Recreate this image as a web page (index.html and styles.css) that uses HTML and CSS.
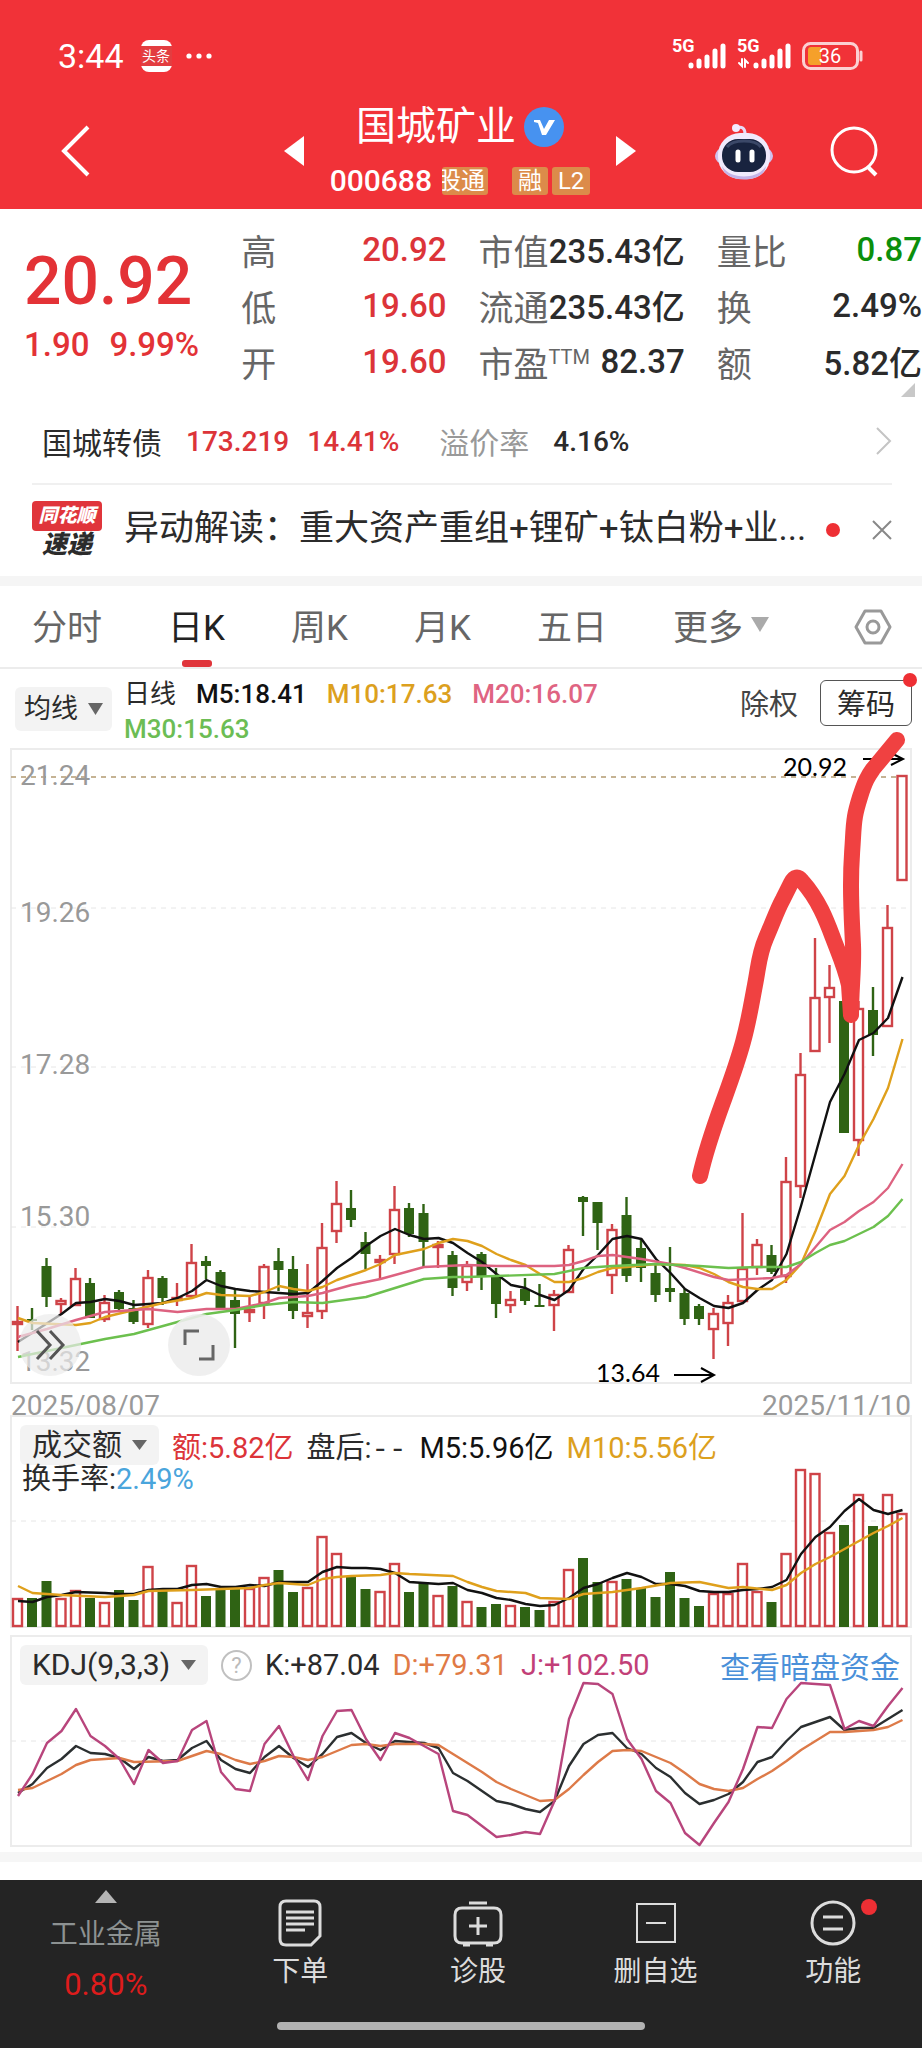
FILE: index.html
```
<!DOCTYPE html>
<html lang="zh">
<head>
    <meta charset="UTF-8">
    <meta name="viewport" content="width=device-width, initial-scale=1.0">
    <title>国城矿业 000688</title>
    <link rel="stylesheet" href="styles.css">
</head>
<body>
    <header class="header">
        <div class="status-bar">
            <span class="status-time">3:44</span>
            <span class="status-app"><span>头条</span></span>
            <svg class="status-dots" width="28" height="8" viewBox="0 0 28 8" fill="#fff"><circle cx="4" cy="4" r="2.6"/><circle cx="14" cy="4" r="2.6"/><circle cx="24" cy="4" r="2.6"/></svg>
            <div class="status-right">
                <div class="signal">
                    <span>5G</span>
                    <svg width="38" height="26" viewBox="0 0 38 26" stroke="#fff" stroke-width="5" stroke-linecap="round"><path d="M3 23v-1M11 23v-5M19 23v-9M27 23V8M35 23V3"/></svg>
                </div>
                <div class="signal">
                    <span>5G</span>
                    <svg width="54" height="26" viewBox="-16 0 54 26" fill="none" stroke="#fff" stroke-width="5" stroke-linecap="round"><path d="M3 23v-1M11 23v-5M19 23v-9M27 23V8M35 23V3"/><path stroke-width="2" d="M-14 20l3 3v-7M-8 24v-7l3 3"/></svg>
                </div>
                <svg class="battery" width="62" height="28" viewBox="0 0 62 28"><rect x="1.500" y="1.500" width="54" height="25" rx="7" fill="none" stroke="#fbd0d2" stroke-width="3"/><path d="M9 5h10v18H9a3 3 0 0 1-3-3V8a3 3 0 0 1 3-3z" fill="#f5a02a"/><path d="M59 10v8" stroke="#fbd0d2" stroke-width="3" stroke-linecap="round"/><text x="28" y="21" text-anchor="middle" class="battery-text">36</text></svg>
            </div>
        </div>
        <div class="title-bar">
            <button class="icon-button" aria-label="返回"><svg width="32" height="54" viewBox="0 0 32 54" fill="none" stroke="#fff" stroke-width="4"><path d="M28 3L4 27l24 24"/></svg></button>
            <div class="stock-nav">
                <button class="icon-button" aria-label="上一只"><svg width="20" height="30" viewBox="0 0 20 30" fill="#fff"><path d="M20 0v30L0 15z"/></svg></button>
                <div class="stock-info">
                    <h1>国城矿业 <svg width="40" height="40" viewBox="0 0 40 40"><circle cx="20" cy="20" r="20" fill="#4792f0"/><path d="M10 13h6l4 9 5-9h6L22 28h-4l-4-12-4-1z" fill="#fff"/></svg></h1>
                    <div class="stock-code">
                        <span>000688</span>
                        <span class="tag tag-cut"><span>股通</span></span>
                        <span class="tag tag-rong">融</span>
                        <span class="tag">L2</span>
                    </div>
                </div>
                <button class="icon-button" aria-label="下一只"><svg width="20" height="30" viewBox="0 0 20 30" fill="#fff"><path d="M0 0v30l20-15z"/></svg></button>
            </div>
            <div class="title-actions">
                <button class="icon-button" aria-label="智能助手">
                    <svg width="60" height="58" viewBox="0 0 60 58">
                        <path d="M22 6c6-2 9 0 9 6" fill="none" stroke="#e6dcf8" stroke-width="3"/>
                        <circle cx="22" cy="6" r="4" fill="#f3ebff"/>
                        <ellipse cx="30" cy="34" rx="29" ry="14" fill="#cfc2ee"/>
                        <rect x="4" y="11" width="52" height="46" rx="22" fill="#f0eafc"/>
                        <path d="M8 44c8 14 36 14 44 0-2 18-42 18-44 0z" fill="#c3b3e8"/>
                        <rect x="8" y="17" width="44" height="33" rx="16" fill="#18233f"/>
                        <path d="M13 25c6-8 28-8 34 0" fill="none" stroke="#3b4868" stroke-width="3"/>
                        <path d="M24 30v8M38 30v8" stroke="#fff" stroke-width="5" stroke-linecap="round"/>
                    </svg>
                </button>
                <button class="icon-button" aria-label="搜索"><svg width="52" height="52" viewBox="0 0 52 52" fill="none" stroke="#fff" stroke-width="3"><circle cx="26" cy="25" r="22"/><path d="M40 42l8 8" stroke-width="4"/></svg></button>
            </div>
        </div>
    </header>

    <section class="quote">
        <div class="quote-price">
            <strong>20.92</strong>
            <p><span>1.90</span><span>9.99%</span></p>
        </div>
        <dl>
            <div><dt>高</dt><dd class="up">20.92</dd></div>
            <div><dt>低</dt><dd class="up">19.60</dd></div>
            <div><dt>开</dt><dd class="up">19.60</dd></div>
        </dl>
        <dl>
            <div><dt>市值</dt><dd>235.43亿</dd></div>
            <div><dt>流通</dt><dd>235.43亿</dd></div>
            <div><dt>市盈<sup>TTM</sup></dt><dd>82.37</dd></div>
        </dl>
        <dl>
            <div><dt>量比</dt><dd class="down">0.87</dd></div>
            <div><dt>换</dt><dd>2.49%</dd></div>
            <div><dt>额</dt><dd>5.82亿</dd></div>
        </dl>
        <svg class="quote-corner" width="14" height="14" viewBox="0 0 14 14"><path d="M14 0v14H0z" fill="#c8c8c8"/></svg>
    </section>

    <a class="bond" href="#">
        <span class="bond-name">国城转债</span>
        <span class="up">173.219</span>
        <span class="up">14.41%</span>
        <span class="bond-label">溢价率</span>
        <span>4.16%</span>
        <svg width="16" height="28" viewBox="0 0 16 28" fill="none" stroke="#c4c4c4" stroke-width="2"><path d="M1 1l13 13L1 27"/></svg>
    </a>

    <div class="news">
        <div class="news-logo"><span>同花顺</span><b>速递</b></div>
        <a class="news-text" href="#">异动解读：重大资产重组+锂矿+钛白粉+业...</a>
        <i class="dot"></i>
        <button class="icon-button" aria-label="关闭"><svg width="20" height="20" viewBox="0 0 20 20" stroke="#888" stroke-width="2"><path d="M1 1l18 18M19 1L1 19"/></svg></button>
    </div>

    <nav class="tabs">
        <button>分时</button>
        <button class="active">日K</button>
        <button>周K</button>
        <button>月K</button>
        <button>五日</button>
        <button class="more">更多<svg width="18" height="15" viewBox="0 0 18 15" fill="#aaa"><path d="M0 0h18L9 15z"/></svg></button>
        <button class="settings" aria-label="设置"><svg width="38" height="38" viewBox="0 0 38 38" fill="none" stroke="#999" stroke-width="3" stroke-linejoin="round"><path d="M11 3h16l9 16-9 16H11L2 19z"/><circle cx="19" cy="19" r="6"/></svg></button>
    </nav>

    <div class="ma-bar">
        <label class="picker picker-small"><select aria-label="主图指标"><option>均线</option></select><svg width="15" height="12" viewBox="0 0 15 12" fill="#666"><path d="M0 0h15L7.500 12z"/></svg></label>
        <div class="ma-legend">
            <span>日线</span>
            <span class="m5">M5:18.41</span>
            <span class="m10">M10:17.63</span>
            <span class="m20">M20:16.07</span>
            <span class="m30">M30:15.63</span>
        </div>
        <button class="plain-button">除权</button>
        <button class="box-button">筹码<i class="dot"></i></button>
    </div>

    <div class="chart">
        <svg id="kline" viewBox="0 0 900 634"></svg>
        <button class="round-button" aria-label="快进"><svg width="32" height="32" viewBox="0 0 32 32" fill="none" stroke="#555" stroke-width="3"><path d="M3 2l13 14L3 30M16 2l13 14-13 14"/></svg></button>
        <button class="round-button full-button" aria-label="全屏"><svg width="32" height="32" viewBox="0 0 32 32" fill="none" stroke="#666" stroke-width="3"><path d="M2 16V2h14M30 16v14H16"/></svg></button>
    </div>

    <div class="dates"><span>2025/08/07</span><span>2025/11/10</span></div>

    <div class="chart chart-stack">
        <svg id="volume" viewBox="0 0 900 212"></svg>
        <div class="chart-head">
            <div class="chart-row">
                <label class="picker"><select aria-label="副图指标"><option>成交额</option></select><svg width="15" height="10" viewBox="0 0 15 10" fill="#666"><path d="M0 0h15L7.500 10z"/></svg></label>
                <span class="up">额:5.82亿</span>
                <span>盘后:<span class="mono">--</span></span>
                <span class="m5">M5:5.96亿</span>
                <span class="m10">M10:5.56亿</span>
            </div>
            <div class="turnover">换手率:<span>2.49%</span></div>
        </div>
    </div>

    <div class="chart chart-stack chart-kdj">
        <svg id="kdj" viewBox="0 0 900 210"></svg>
        <div class="chart-head">
            <div class="chart-row">
                <label class="picker"><select aria-label="副图指标"><option>KDJ(9,3,3)</option></select><svg width="15" height="10" viewBox="0 0 15 10" fill="#666"><path d="M0 0h15L7.500 10z"/></svg></label>
                <button class="help" aria-label="说明">?</button>
                <span>K:+87.04</span>
                <span class="d">D:+79.31</span>
                <span class="j">J:+102.50</span>
                <a class="fund-link" href="#">查看暗盘资金</a>
            </div>
        </div>
    </div>

    <div class="divider"></div>

    <nav class="bottom-nav">
        <a class="sector" href="#">
            <svg width="22" height="13" viewBox="0 0 22 13" fill="#b4b4b4"><path d="M11 0l11 13H0z"/></svg>
            <span>工业金属</span>
            <b>0.80%</b>
        </a>
        <a href="#">
            <svg width="44" height="48" viewBox="0 0 44 48" fill="none" stroke="#dcdcdc" stroke-width="3"><path d="M8 2h28q6 0 6 6v29l-9 9H8q-6 0-6-6V8q0-6 6-6z"/><path d="M8 13h28M8 19h28M8 25h28M8 31h19"/></svg>
            <span>下单</span>
        </a>
        <a href="#">
            <svg width="50" height="48" viewBox="0 0 50 48" fill="none" stroke="#dcdcdc" stroke-width="3"><path d="M16 4h18M9 9h32q7 0 7 7v21q0 7-7 7H9q-7 0-7-7V16q0-7 7-7zM25 18v18M16 27h18M10 46h7M33 46h7"/></svg>
            <span>诊股</span>
        </a>
        <a href="#">
            <svg width="42" height="48" viewBox="0 0 42 48" fill="none" stroke="#dcdcdc" stroke-width="2"><path d="M2 5h38v38H2zM11 24h20"/></svg>
            <span>删自选</span>
        </a>
        <a href="#">
            <span class="nav-icon"><svg width="46" height="48" viewBox="0 0 46 48" fill="none" stroke="#dcdcdc" stroke-width="3"><circle cx="23" cy="24" r="21"/><path d="M13 18h20M13 30h20"/></svg><i class="dot"></i></span>
            <span>功能</span>
        </a>
    </nav>
    <footer class="home"><i></i></footer>

    <script src="chart.js"></script>
</body>
</html>
```

FILE: styles.css
```
* {
    box-sizing: border-box;
}

body {
    margin: 0;
    font-family: Roboto, "Noto Sans CJK SC", sans-serif;
    color: #2b2b2b;
    background: #fff;
    overflow-x: hidden;
}

h1, dl, dd, p {
    margin: 0;
    font-weight: normal;
}

a {
    color: inherit;
    text-decoration: none;
}

button, select {
    font: inherit;
    color: inherit;
    background: none;
    border: none;
    padding: 0;
    cursor: pointer;
}

svg {
    display: block;
    flex: none;
}

.icon-button {
    flex: none;
}

.up {
    color: #dc3439;
}

.down {
    color: #0b8f0b;
}

.dot {
    flex: none;
    width: 14px;
    height: 14px;
    border-radius: 50%;
    background: #ee2f34;
}

/* 顶部 */
.header {
    background: #f13238;
    color: #fff;
}

.status-bar {
    display: flex;
    align-items: center;
    height: 96px;
    padding: 16px 58px 0;
}

.status-time {
    font-size: 34px;
}

.status-app {
    display: flex;
    align-items: center;
    width: 31px;
    height: 32px;
    margin: 0 13px 0 17px;
    border-radius: 8px;
    background: #fff;
}

.status-app span {
    width: 100%;
    font-size: 14px;
    line-height: 20px;
    text-align: center;
    background: #e33d40;
}

.status-right {
    display: flex;
    align-items: center;
    gap: 11px;
    margin-left: auto;
}

.signal {
    position: relative;
    padding-left: 16px;
}

.signal:nth-child(2) {
    padding-left: 0;
}

.signal span {
    position: absolute;
    top: -6px;
    left: 0;
    font-size: 18px;
    font-weight: 700;
    line-height: 18px;
}

.battery-text {
    fill: #fff;
    font-size: 20px;
}

.title-bar {
    display: grid;
    grid-template-columns: 1fr auto 1fr;
    align-items: center;
    height: 113px;
    padding: 0 42px 4px 60px;
}

.stock-nav {
    display: flex;
    align-items: center;
    gap: 26px;
    margin-left: -20px;
}

.stock-info {
    display: flex;
    flex-direction: column;
    align-items: center;
    gap: 11px;
}

.stock-info h1 {
    display: flex;
    align-items: center;
    gap: 8px;
    font-size: 40px;
    line-height: 50px;
}

.stock-code {
    display: flex;
    align-items: center;
    gap: 4px;
    font-size: 30px;
    font-weight: 500;
    line-height: 36px;
}

.tag {
    padding: 0 6px;
    border-radius: 3px;
    font-size: 24px;
    font-weight: 400;
    line-height: 28px;
    white-space: nowrap;
    background: #dc8b4a;
}

.tag-cut {
    display: flex;
    justify-content: flex-end;
    width: 46px;
    padding: 0 3px 0 0;
    margin-left: 6px;
    overflow: hidden;
}

.tag-rong {
    margin-left: 20px;
}

.title-actions {
    display: flex;
    justify-content: flex-end;
    align-items: center;
    gap: 54px;
}

/* 行情 */
.quote {
    position: relative;
    display: grid;
    grid-template-columns: 185fr 205fr 206fr 205fr;
    column-gap: 32px;
    padding: 12px 0 6px 24px;
}

.quote-price {
    padding-top: 28px;
    color: #e33236;
    white-space: nowrap;
}

.quote-price strong {
    display: block;
    font-size: 66px;
    font-weight: 500;
    line-height: 66px;
}

.quote-price p {
    display: flex;
    gap: 20px;
    margin-top: 8px;
    font-size: 33px;
    font-weight: 500;
    line-height: 44px;
}

.quote dl div {
    display: flex;
    justify-content: space-between;
    align-items: center;
    height: 56px;
    white-space: nowrap;
}

.quote dt {
    font-size: 35px;
    color: #666;
}

.quote sup {
    font-size: 20px;
}

.quote dd {
    font-size: 33px;
    font-weight: 500;
}

.quote-corner {
    position: absolute;
    right: 7px;
    bottom: -2px;
}

.bond {
    display: flex;
    align-items: center;
    height: 90px;
    margin: 0 30px 0 32px;
    padding: 4px 0 0 10px;
    font-size: 28px;
    font-weight: 500;
    border-bottom: 2px solid #f0f0f0;
}

.bond span {
    margin-right: 18px;
}

.bond .bond-name, .bond .bond-label {
    margin-right: 24px;
    font-size: 30px;
    font-weight: 400;
}

.bond .bond-label {
    margin-left: 22px;
    color: #999;
}

.bond svg {
    margin-left: auto;
}

.news {
    display: flex;
    align-items: center;
    height: 91px;
    padding: 0 30px 2px 32px;
}

.news-logo {
    width: 70px;
    margin-right: 22px;
    font-style: italic;
    font-weight: 900;
    text-align: center;
}

.news-logo span {
    display: block;
    border-radius: 4px;
    font-size: 19px;
    line-height: 30px;
    color: #fff;
    background: #e0353b;
}

.news-logo b {
    display: block;
    font-size: 25px;
    line-height: 28px;
}

.news-text {
    flex: 1;
    font-size: 35px;
    line-height: 50px;
    padding-bottom: 2px;
    white-space: nowrap;
}

.news .icon-button {
    margin-left: 32px;
}

/* 周期 */
.tabs {
    display: flex;
    gap: 66px;
    height: 93px;
    padding: 0 30px 0 32px;
    font-size: 35px;
    color: #666;
    border-top: 10px solid #f5f5f5;
    border-bottom: 2px solid #ececec;
}

.tabs button {
    position: relative;
    padding-bottom: 4px;
    white-space: nowrap;
}

.tabs .active {
    color: #222;
}

.tabs .active::after {
    content: "";
    position: absolute;
    bottom: 0;
    left: 50%;
    width: 30px;
    height: 7px;
    margin-left: -15px;
    border-radius: 3px;
    background: #e0353b;
}

.tabs .more {
    display: flex;
    align-items: center;
    gap: 8px;
}

.tabs .settings {
    padding-bottom: 0;
    margin-left: auto;
}

.ma-bar {
    display: flex;
    align-items: center;
    height: 80px;
    padding: 0 10px 0 15px;
}

.picker {
    display: flex;
    align-items: center;
    gap: 10px;
    height: 40px;
    padding: 0 12px;
    border-radius: 6px;
    font-size: 30px;
    background: #f3f3f3;
}

.picker select {
    appearance: none;
    line-height: 40px;
}

.picker-small {
    height: 44px;
    padding: 0 9px;
    font-size: 27px;
}

.ma-legend {
    display: flex;
    flex: 1;
    flex-wrap: wrap;
    column-gap: 20px;
    padding: 6px 0 0 12px;
    font-size: 26px;
    line-height: 35px;
}

.ma-legend span {
    font-weight: 500;
}

.ma-legend span:first-child {
    font-weight: 400;
}

.m5 {
    color: #111;
}

.m10 {
    color: #dca01e;
}

.m20 {
    color: #df6482;
}

.m30 {
    color: #6cbd54;
}

.plain-button {
    margin: 0 22px 14px;
    font-size: 29px;
    color: #444;
}

.box-button {
    position: relative;
    height: 46px;
    padding: 0 16px 4px;
    margin-bottom: 12px;
    border: 1px solid #555;
    border-radius: 6px;
    font-size: 29px;
}

.box-button .dot {
    position: absolute;
    top: -8px;
    right: -6px;
}

/* 图表 */
.chart {
    position: relative;
    margin: 0 11px;
}

.chart > svg {
    width: 100%;
    height: auto;
    overflow: visible;
}

.chart-stack {
    display: grid;
}

.chart-stack > * {
    grid-area: 1 / 1;
}

.chart-kdj {
    margin-top: 8px;
}

.chart-head {
    position: relative;
    padding: 9px 11px 0 9px;
    font-size: 29px;
}

.chart-row {
    display: flex;
    align-items: center;
    gap: 13px;
    height: 40px;
    white-space: nowrap;
}

.turnover {
    padding-left: 2px;
    line-height: 28px;
}

.turnover span {
    color: #4aa5dc;
}

.mono {
    font-family: "Liberation Mono", monospace;
}

.d {
    color: #e07a45;
}

.j {
    color: #c23f78;
}

.help {
    width: 31px;
    height: 31px;
    border: 2px solid #c0c0c0;
    border-radius: 50%;
    font-size: 22px;
    line-height: 27px;
    color: #bbb;
}

.fund-link {
    margin-left: auto;
    font-size: 30px;
    color: #4a90d9;
}

.round-button {
    position: absolute;
    left: 8px;
    bottom: 7px;
    display: flex;
    align-items: center;
    justify-content: center;
    width: 62px;
    height: 62px;
    border-radius: 50%;
    background: rgba(235, 235, 235, 0.7);
}

.full-button {
    left: 157px;
    background: rgba(237, 237, 237, 0.9);
}

.axis-text {
    font-size: 28px;
    fill: #999;
}

.mark-text {
    font-family: Lato, sans-serif;
    font-size: 25px;
}

.dates {
    display: flex;
    justify-content: space-between;
    margin: 0 11px;
    height: 33px;
    font-size: 28px;
    line-height: 46px;
    color: #999;
}

/* 底部 */
.divider {
    height: 28px;
    margin-top: 6px;
    border-top: 10px solid #f6f6f6;
}

.bottom-nav {
    display: grid;
    grid-template-columns: 212fr 178fr 178fr 178fr 178fr;
    height: 132px;
    font-size: 28px;
    color: #dcdcdc;
    background: #242424;
}

.bottom-nav a {
    display: flex;
    flex-direction: column;
    align-items: center;
    gap: 7px;
    padding-top: 19px;
    line-height: 36px;
}

.bottom-nav .sector {
    gap: 14px;
    padding-top: 10px;
    color: #8d9292;
}

.sector b {
    font-size: 31px;
    font-weight: 400;
    color: #dd1c1c;
}

.nav-icon {
    position: relative;
}

.nav-icon .dot {
    position: absolute;
    top: 0;
    right: -21px;
    width: 16px;
    height: 16px;
}

.home {
    display: flex;
    justify-content: center;
    height: 36px;
    padding-top: 10px;
    background: #242424;
}

.home i {
    width: 40%;
    height: 8px;
    border-radius: 4px;
    background: #b2b2b2;
}
```

FILE: chart.js
```
const RED = '#cf4348';
const GREEN = '#2f6314';
const STEP = 14.5;

// 涨跌, 最高, 实体上沿, 实体下沿, 最低
const candles = [
    ['r', 557, 572, 576, 602], ['g', 559, 570, 571, 581], ['g', 509, 517, 548, 558], ['r', 549, 551, 556, 566],
    ['r', 519, 529, 557, 557], ['g', 529, 534, 569, 569], ['r', 546, 553, 571, 573], ['g', 541, 543, 560, 562],
    ['g', 551, 559, 573, 575], ['r', 521, 528, 576, 579], ['g', 527, 529, 549, 556], ['r', 534, 548, 552, 557],
    ['r', 495, 513, 548, 548], ['g', 507, 512, 517, 530], ['g', 521, 523, 559, 559], ['g', 540, 551, 565, 599],
    ['r', 548, 560, 564, 573], ['r', 515, 517, 555, 570], ['g', 499, 512, 521, 542], ['g', 507, 520, 562, 570],
    ['r', 515, 563, 568, 579], ['r', 474, 498, 563, 570], ['r', 432, 454, 483, 494], ['g', 441, 459, 471, 478],
    ['g', 483, 493, 505, 520], ['r', 506, 510, 514, 531], ['r', 437, 460, 506, 515], ['g', 454, 459, 485, 488],
    ['g', 455, 464, 493, 518], ['r', 492, 495, 499, 519], ['g', 502, 506, 539, 547], ['r', 512, 516, 534, 542],
    ['g', 503, 505, 528, 541], ['g', 519, 527, 555, 569], ['r', 542, 550, 557, 564], ['g', 529, 540, 552, 556],
    ['g', 535, 556, 558, 558], ['r', 541, 545, 557, 582], ['r', 496, 500, 544, 544], ['g', 447, 448, 453, 487],
    ['g', 453, 453, 474, 501], ['r', 475, 480, 527, 545], ['g', 448, 466, 527, 533], ['g', 490, 499, 519, 533],
    ['g', 515, 524, 546, 553], ['g', 498, 539, 543, 553], ['g', 540, 544, 570, 576], ['g', 555, 557, 570, 576],
    ['r', 559, 564, 581, 610], ['r', 546, 553, 575, 597], ['r', 464, 519, 553, 553], ['r', 490, 495, 519, 526],
    ['g', 496, 506, 523, 525], ['r', 408, 432, 528, 534], ['r', 304, 325, 438, 449], ['r', 189, 248, 303, 303],
    ['r', 216, 238, 249, 294], ['g', 252, 252, 384, 384], ['r', 252, 259, 392, 407], ['g', 238, 261, 286, 307],
    ['r', 156, 178, 278, 278], ['r', 26, 26, 132, 132]
];

const volumes = [
    182, 182, 165, 182, 174, 182, 186, 174, 184, 150, 175, 186, 149, 180, 172, 172, 172, 161, 154, 176, 171,
    120, 137, 160, 173, 175, 147, 176, 166, 179, 170, 185, 191, 188, 189, 191, 194, 185, 153, 142, 166, 165,
    163, 172, 181, 156, 182, 190, 177, 177, 147, 175, 186, 137, 53, 57, 116, 109, 78, 110, 78, 97
];

// 各曲线为 "序号,高度"
const lines = {
    m5: '0,593 3,565 4,554 5,553 6,550 7,552 8,556 10,554 11,549 12,542 13,531 14,537 15,540 16,542 18,544 19,545 20,544 21,532 22,519 23,509 24,497 25,487 26,480 27,486 28,490 29,489 30,494 31,504 32,513 33,525 34,536 35,539 36,546 37,551 38,541 39,520 40,506 41,490 42,487 43,490 44,510 45,524 46,540 47,549 48,557 49,559 50,554 51,541 52,531 53,505 54,457 55,405 56,353 57,325 58,291 59,284 60,269 61,228',
    m10: '0,569 1,574 4,576 5,574 6,568 8,561 10,554 12,549 13,544 14,546 16,547 17,543 18,537 19,540 20,542 21,538 22,531 23,526 24,521 25,515 26,506 27,503 28,500 29,494 30,490 31,492 32,497 33,505 34,511 35,516 36,525 37,533 38,533 39,529 40,523 41,519 42,518 44,515 46,516 47,519 48,525 49,533 50,538 51,540 52,540 53,531 54,515 55,482 56,445 57,427 58,396 59,370 60,339 61,290',
    m20: '0,588 2,580 4,571 6,563 9,560 11,563 13,560 15,560 17,554 18,549 20,547 21,544 23,536 25,530 27,522 28,518 31,516 33,517 37,517 38,516 39,512 40,507 41,506 43,510 45,515 46,519 48,528 49,531 52,529 53,526 54,515 55,498 56,481 57,473 58,462 59,453 60,439 61,415',
    m30: '0,608 2,602 4,596 6,590 8,585 10,577 12,569 13,565 15,561 17,556 19,553 21,554 24,548 26,539 28,530 30,528 31,528 37,525 39,519 41,517 44,515 47,517 49,519 51,518 53,518 54,513 55,504 56,496 57,492 58,485 59,478 60,467 61,450',
    v5: '0,185 1,186 2,181 3,179 4,176 6,177 7,178 8,178 9,174 10,173 11,173 12,169 13,168 14,171 15,171 16,169 17,170 18,166 20,166 21,156 22,151 23,152 24,152 25,153 26,157 27,166 28,167 29,168 30,167 31,174 32,177 33,182 34,184 35,188 36,190 37,189 38,182 39,172 40,168 41,162 42,157 43,161 44,168 45,168 46,170 47,175 48,176 49,176 50,174 51,173 52,171 53,164 54,138 55,121 56,111 57,95 58,83 59,94 60,98 61,94',
    v10: '0,170 1,177 3,179 6,181 8,179 9,175 12,174 14,173 16,172 17,169 18,167 20,169 21,163 22,161 23,160 25,159 26,157 27,158 30,160 31,166 32,171 33,175 35,177 36,182 38,183 39,178 41,176 43,172 45,167 47,166 49,172 50,171 52,174 53,169 54,157 55,148 56,141 57,133 58,125 59,117 60,110 61,102',
    k: '0,157 1,148 2,132 3,123 4,110 5,117 6,118 7,122 8,133 9,121 10,125 11,124 12,112 13,105 14,124 15,133 16,137 17,121 18,110 19,122 20,131 21,118 22,101 23,97 24,107 25,114 26,105 28,107 29,112 30,137 31,145 32,155 33,165 34,168 35,173 36,176 37,165 38,130 39,108 40,99 41,97 42,112 43,118 44,132 45,141 46,157 47,168 48,164 49,158 50,146 51,126 52,121 53,105 54,91 55,86 56,81 57,94 58,92 59,92 60,83 61,74',
    d: '0,154 1,152 2,145 3,138 4,129 5,124 6,123 7,122 8,126 11,125 12,120 13,115 14,118 15,124 16,128 17,125 18,120 19,121 20,124 21,121 22,115 23,109 24,108 25,110 26,108 28,108 29,109 30,118 31,127 32,136 33,146 34,153 35,159 36,165 37,164 38,153 39,139 40,126 41,115 42,114 43,115 44,121 45,127 46,137 47,148 48,153 49,155 50,152 51,143 52,135 53,125 54,114 55,105 56,96 57,96 58,95 59,94 60,91 61,84',
    j: '0,160 1,138 2,107 3,95 4,73 5,100 6,110 7,123 8,148 9,114 10,127 11,125 12,94 13,85 14,136 15,153 16,155 17,108 18,90 19,120 20,144 21,100 22,75 23,74 24,103 25,124 26,97 27,102 28,110 29,118 30,175 31,179 33,201 34,199 35,196 36,198 37,165 38,83 39,47 40,48 41,58 42,103 43,123 44,155 45,167 46,197 47,209 48,187 49,166 50,133 51,91 52,92 53,63 54,47 55,48 56,49 57,93 58,85 59,90 60,70 61,52'
};

function line(name, color) {
    const points = lines[name].split(' ').map(p => {
        const [i, y] = p.split(',').map(Number);
        return `${7 + i * STEP},${y}`;
    }).join(' ');
    return `<polyline points="${points}" fill="none" stroke="${color}" stroke-width="2.4" stroke-linejoin="round"/>`;
}

function frame(height) {
    return `<rect x="0" y="0" width="900" height="${height}" fill="none" stroke="#ececec" stroke-width="2"/>`;
}

function grid(y, color = '#e6e6e6') {
    return `<path d="M0 ${y}H900" stroke="${color}" stroke-width="1" stroke-dasharray="5 5"/>`;
}

function bar(type, x, top, bottom) {
    if (type === 'r') {
        return `<rect x="${x - 4.5}" y="${top + 1}" width="9" height="${Math.max(bottom - top - 2, 1)}" fill="#fff" stroke="${RED}" stroke-width="2.4"/>`;
    }
    return `<rect x="${x - 5}" y="${top}" width="10" height="${Math.max(bottom - top, 2)}" fill="${GREEN}"/>`;
}

function drawKline() {
    let html = frame(634) + [159, 318, 478].map(y => grid(y)).join('');
    html += '<path d="M0 28H895" stroke="#b39a72" stroke-width="1.5" stroke-dasharray="5 5"/>';
    [['21.24', 36], ['19.26', 173], ['17.28', 325], ['15.30', 477], ['13.32', 622]].forEach(([t, y]) => {
        html += `<text x="9" y="${y}" class="axis-text">${t}</text>`;
    });
    candles.forEach(([type, high, top, bottom, low], i) => {
        const x = 6.5 + i * STEP;
        html += `<path d="M${x} ${high}V${low}" stroke="${type === 'r' ? RED : GREEN}" stroke-width="2.4"/>`;
        html += bar(type, x, top, bottom);
    });
    html += line('m5', '#111') + line('m10', '#dfa01c') + line('m20', '#dd6280') + line('m30', '#6cc04e');
    html += '<text x="772" y="27" class="mark-text">20.92</text><text x="585" y="633" class="mark-text">13.64</text>';
    html += '<path d="M852 10h40M880 4l12 6-12 6M663 626h40M690 619l13 7-13 7" fill="none" stroke="#000" stroke-width="2"/>';
    // 手绘走势
    html += '<path d="M689 427C695 400 704 375 712 353S726 315 732 293 740 257 744 236 748 205 755 189 766 161 772 150L780 134Q785 124 791 132C808 151 816 173 822 189S834 218 838 236L840 266C840 240 843 218 842 196S840 160 840 136 841 108 842 89 844 64 849 48 857 27 862 20L886-9" fill="none" stroke="#f04141" stroke-width="16" stroke-linecap="round" stroke-linejoin="round"/>';
    document.getElementById('kline').innerHTML = html;
}

function drawVolume() {
    let html = frame(211) + grid(105);
    volumes.forEach((top, i) => {
        html += bar(candles[i][0], 6.5 + i * STEP, top, 211);
    });
    html += line('v5', '#111') + line('v10', '#dfa01c');
    document.getElementById('volume').innerHTML = html;
}

function drawKdj() {
    document.getElementById('kdj').innerHTML = frame(210) + grid(105)
        + line('k', '#2b2f30') + line('d', '#dd7a48') + line('j', '#b8457c');
}

drawKline();
drawVolume();
drawKdj();
```
